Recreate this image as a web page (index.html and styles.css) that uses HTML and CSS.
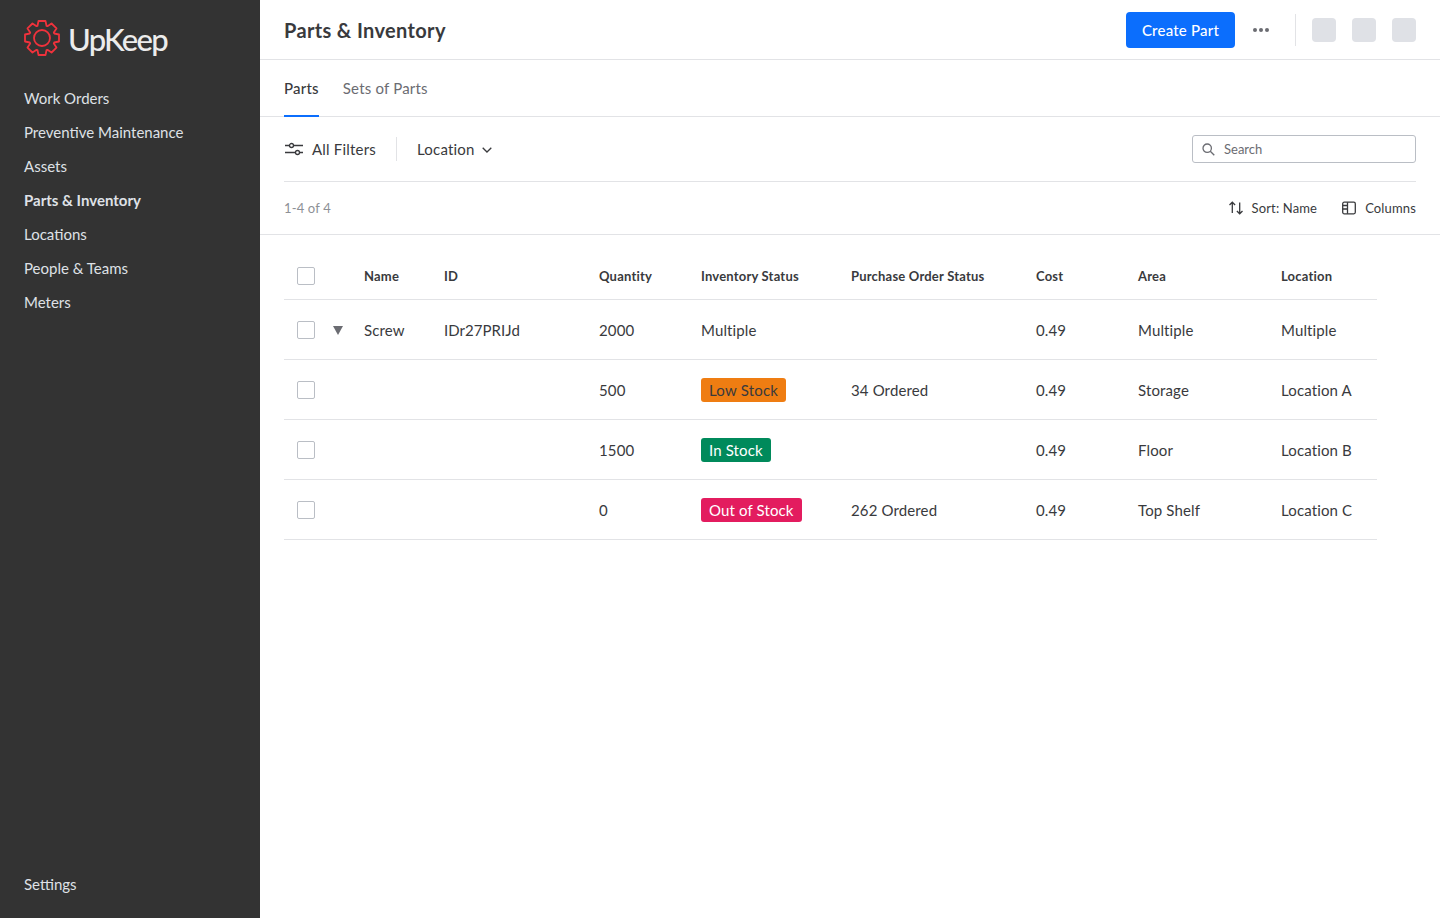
FILE: index.html
```html
<!DOCTYPE html>
<html lang="en">

<head>
    <meta charset="UTF-8">
    <meta name="viewport" content="width=device-width, initial-scale=1.0">
    <title>Parts &amp; Inventory</title>
    <link rel="stylesheet" href="styles.css">
</head>

<body>
    <div class="app">
        <aside class="sidebar">
            <div class="logo">
                <svg class="logo-icon" width="36" height="36" viewBox="0 0 36 36" fill="none" stroke="#f0323c" stroke-width="1.800">
                    <polygon stroke-linejoin="round" points="13.500,5.800 14.500,1 21.500,1 22.500,5.800 23.440,6.190 27.550,3.500 32.500,8.450 29.810,12.560 30.200,13.500 35,14.500 35,21.500 30.200,22.500 29.810,23.440 32.500,27.550 27.550,32.500 23.440,29.810 22.500,30.200 21.500,35 14.500,35 13.500,30.200 12.560,29.810 8.450,32.500 3.500,27.550 6.190,23.440 5.800,22.500 1,21.500 1,14.500 5.800,13.500 6.190,12.560 3.500,8.450 8.450,3.500 12.560,6.190"/>
                    <circle cx="18" cy="18" r="8"/>
                </svg>
                <span class="logo-text">UpKeep</span>
            </div>
            <nav class="nav">
                <a class="nav-item">Work Orders</a>
                <a class="nav-item">Preventive Maintenance</a>
                <a class="nav-item">Assets</a>
                <a class="nav-item active">Parts &amp; Inventory</a>
                <a class="nav-item">Locations</a>
                <a class="nav-item">People &amp; Teams</a>
                <a class="nav-item">Meters</a>
            </nav>
            <a class="nav-item settings">Settings</a>
        </aside>

        <main class="content">
            <header class="topbar">
                <h1 class="title">Parts &amp; Inventory</h1>
                <div class="top-actions">
                    <button class="btn-primary">Create Part</button>
                    <span class="more"><i></i><i></i><i></i></span>
                    <span class="top-sep"></span>
                    <span class="square"></span>
                    <span class="square"></span>
                    <span class="square"></span>
                </div>
            </header>

            <div class="tabs">
                <a class="tab active">Parts</a>
                <a class="tab">Sets of Parts</a>
            </div>

            <div class="filters">
                <a class="all-filters">
                    <svg width="20" height="14" viewBox="0 0 20 14" fill="none" stroke="#393a3d" stroke-width="1.300">
                        <path d="M1 3.500h4M10 3.500h9M1 10.500h10M16 10.500h3"/>
                        <circle cx="7.500" cy="3.500" r="2"/>
                        <circle cx="13.500" cy="10.500" r="2"/>
                    </svg>
                    All Filters
                </a>
                <span class="filter-sep"></span>
                <a class="location-filter">
                    Location
                    <svg width="10" height="6" viewBox="0 0 10 6" fill="none" stroke="#393a3d" stroke-width="1.300">
                        <path d="M.7.700 5 5l4.300-4.300"/>
                    </svg>
                </a>
                <div class="search">
                    <svg width="13" height="13" viewBox="0 0 13 13" fill="none" stroke="#6b6c72" stroke-width="1.300">
                        <circle cx="5.200" cy="5.200" r="4.200"/>
                        <path d="m8.300 8.300 4 4"/>
                    </svg>
                    <span>Search</span>
                </div>
            </div>

            <div class="summary">
                <span class="count">1-4 of 4</span>
                <div class="summary-actions">
                    <a class="summary-link">
                        <svg width="14" height="14" viewBox="0 0 14 14" fill="none" stroke="#393a3d" stroke-width="1.300">
                            <path d="M3.300 12V1.200M.5 4l2.800-2.800L6.100 4M10.700 1.500v11.300M7.900 10l2.800 2.800 2.800-2.800"/>
                        </svg>
                        Sort: Name
                    </a>
                    <a class="summary-link">
                        <svg width="14" height="14" viewBox="0 0 14 14" fill="none" stroke="#393a3d" stroke-width="1.300">
                            <rect x=".7" y="1.200" width="12.600" height="11.600" rx="1.500"/>
                            <path d="M5.500 1.200v11.600M.7 4.500h4.800M.7 8h4.800"/>
                        </svg>
                        Columns
                    </a>
                </div>
            </div>

            <div class="table-wrap">
                <table class="parts">
                    <colgroup>
                        <col class="c-check">
                        <col class="c-arrow">
                        <col class="c-name">
                        <col class="c-id">
                        <col class="c-qty">
                        <col class="c-inv">
                        <col class="c-po">
                        <col class="c-cost">
                        <col class="c-area">
                        <col class="c-loc">
                    </colgroup>
                    <thead>
                        <tr>
                            <th><span class="check"></span></th>
                            <th></th>
                            <th>Name</th>
                            <th>ID</th>
                            <th>Quantity</th>
                            <th>Inventory Status</th>
                            <th>Purchase Order Status</th>
                            <th>Cost</th>
                            <th>Area</th>
                            <th>Location</th>
                        </tr>
                    </thead>
                    <tbody>
                        <tr>
                            <td><span class="check"></span></td>
                            <td><span class="arrow"></span></td>
                            <td>Screw</td>
                            <td class="part-id">IDr27PRIJd</td>
                            <td>2000</td>
                            <td>Multiple</td>
                            <td></td>
                            <td>0.49</td>
                            <td>Multiple</td>
                            <td>Multiple</td>
                        </tr>
                        <tr>
                            <td><span class="check"></span></td>
                            <td></td>
                            <td></td>
                            <td></td>
                            <td>500</td>
                            <td><span class="badge low">Low Stock</span></td>
                            <td>34 Ordered</td>
                            <td>0.49</td>
                            <td>Storage</td>
                            <td>Location A</td>
                        </tr>
                        <tr>
                            <td><span class="check"></span></td>
                            <td></td>
                            <td></td>
                            <td></td>
                            <td>1500</td>
                            <td><span class="badge in">In Stock</span></td>
                            <td></td>
                            <td>0.49</td>
                            <td>Floor</td>
                            <td>Location B</td>
                        </tr>
                        <tr>
                            <td><span class="check"></span></td>
                            <td></td>
                            <td></td>
                            <td></td>
                            <td>0</td>
                            <td><span class="badge out">Out of Stock</span></td>
                            <td>262 Ordered</td>
                            <td>0.49</td>
                            <td>Top Shelf</td>
                            <td>Location C</td>
                        </tr>
                    </tbody>
                </table>
            </div>
        </main>
    </div>
</body>

</html>
```

FILE: styles.css
```css
* {
    box-sizing: border-box;
}

body {
    margin: 0;
    font-family: Lato, "Liberation Sans", sans-serif;
    color: #393a3d;
    background: #fff;
}

.app {
    display: flex;
    height: 918px;
    overflow: hidden;
}

/* sidebar */
.sidebar {
    width: 260px;
    flex: none;
    background: #333;
    display: flex;
    flex-direction: column;
    padding: 20px 24px 23px;
}

.logo {
    display: flex;
    align-items: center;
    gap: 9px;
    height: 36px;
    margin-bottom: 31px;
}

.logo-text {
    font-size: 31px;
    font-weight: 500;
    color: #ececec;
    letter-spacing: -1.700px;
    line-height: 36px;
    margin: 2px 0 0 -1px;
}

.nav {
    display: flex;
    flex-direction: column;
    gap: 12px;
    flex: 1;
}

.nav-item {
    font-size: 15px;
    line-height: 22px;
    color: #dfe1e6;
}

.nav-item.active {
    font-weight: 700;
}

/* top bar */
.content {
    flex: 1;
    min-width: 0;
}

.topbar {
    height: 60px;
    border-bottom: 1px solid #e2e3e6;
    padding: 0 24px;
    display: flex;
    align-items: center;
    justify-content: space-between;
}

.title {
    margin: 0;
    font-size: 20px;
    font-weight: 700;
    letter-spacing: .35px;
    color: #393a3d;
}

.top-actions {
    display: flex;
    align-items: center;
}

.btn-primary {
    width: 109px;
    height: 36px;
    border: 0;
    border-radius: 4px;
    background: #0b6efd;
    color: #fff;
    font: 500 15px Lato, sans-serif;
    letter-spacing: .2px;
    padding: 0;
}

.more {
    display: flex;
    gap: 2px;
    margin: 0 26px 0 18px;
}

.more i {
    width: 4px;
    height: 4px;
    border-radius: 50%;
    background: #6b6c72;
}

.top-sep {
    width: 1px;
    height: 32px;
    background: #e2e3e6;
    margin-right: 16px;
}

.square {
    width: 24px;
    height: 24px;
    border-radius: 4px;
    background: #dfe1e6;
    margin-right: 16px;
}

.square:last-child {
    margin-right: 0;
}

/* tabs */
.tabs {
    height: 57px;
    border-bottom: 1px solid #e2e3e6;
    padding: 0 24px;
    display: flex;
    gap: 24px;
    letter-spacing: .2px;
}

.tab {
    font-size: 15px;
    line-height: 56px;
    color: #6b6c72;
    height: 57px;
}

.tab.active {
    color: #393a3d;
    font-weight: 500;
    border-bottom: 2px solid #0b6efd;
}

/* filter row */
.filters {
    height: 65px;
    margin: 0 24px;
    border-bottom: 1px solid #e2e3e6;
    display: flex;
    align-items: center;
    font-size: 15px;
}

.all-filters {
    display: flex;
    align-items: center;
    gap: 8px;
    letter-spacing: .2px;
}

.filter-sep {
    width: 1px;
    height: 24px;
    background: #e2e3e6;
    margin: 0 20px;
}

.location-filter {
    display: flex;
    align-items: center;
    gap: 7px;
    letter-spacing: .2px;
}

.location-filter svg {
    margin-top: 2px;
}

.search {
    margin-left: auto;
    width: 224px;
    height: 28px;
    border: 1px solid #babec5;
    border-radius: 3px;
    display: flex;
    align-items: center;
    gap: 9px;
    padding: 0 9px;
    font-size: 13px;
    color: #6b6c72;
}

/* count row */
.summary {
    height: 53px;
    border-bottom: 1px solid #e2e3e6;
    padding: 0 24px;
    display: flex;
    align-items: center;
    justify-content: space-between;
    font-size: 13px;
    letter-spacing: .15px;
}

.count {
    color: #8d9096;
}

.summary-actions {
    display: flex;
    gap: 25px;
}

.summary-link {
    display: flex;
    align-items: center;
    gap: 9px;
}

/* table */
.table-wrap {
    padding: 18px 0 0 24px;
}

.parts {
    width: 1093px;
    table-layout: fixed;
    border-collapse: collapse;
    font-size: 15px;
    letter-spacing: .13px;
}

.c-check { width: 46px; }
.c-arrow { width: 34px; }
.c-name { width: 80px; }
.c-id { width: 155px; }
.c-qty { width: 102px; }
.c-inv { width: 150px; }
.c-po { width: 185px; }
.c-cost { width: 102px; }
.c-area { width: 143px; }
.c-loc { width: 96px; }

.parts th {
    height: 46px;
    padding: 0;
    text-align: left;
    font-size: 13px;
    font-weight: 700;
    letter-spacing: .2px;
    border-bottom: 1px solid #e2e3e6;
}

.parts td {
    height: 60px;
    padding: 1px 0 0;
    border-bottom: 1px solid #e2e3e6;
}

.parts .part-id {
    letter-spacing: .05px;
}

.check {
    display: block;
    width: 18px;
    height: 18px;
    margin-left: 13px;
    border: 1px solid #babec5;
    border-radius: 2px;
}

.arrow {
    display: block;
    width: 0;
    height: 0;
    margin: 1px 0 0 3px;
    border-left: 5.500px solid transparent;
    border-right: 5.500px solid transparent;
    border-top: 9px solid #6b6c72;
}

.badge {
    display: inline-block;
    height: 24px;
    line-height: 24px;
    padding: 0 8px;
    border-radius: 3px;
    vertical-align: middle;
    color: #fff;
}

.badge.low {
    background: #ef7d12;
    color: #393a3d;
    letter-spacing: .2px;
}

.badge.in {
    background: #008a5b;
}

.badge.out {
    background: #e31c5f;
}
```
